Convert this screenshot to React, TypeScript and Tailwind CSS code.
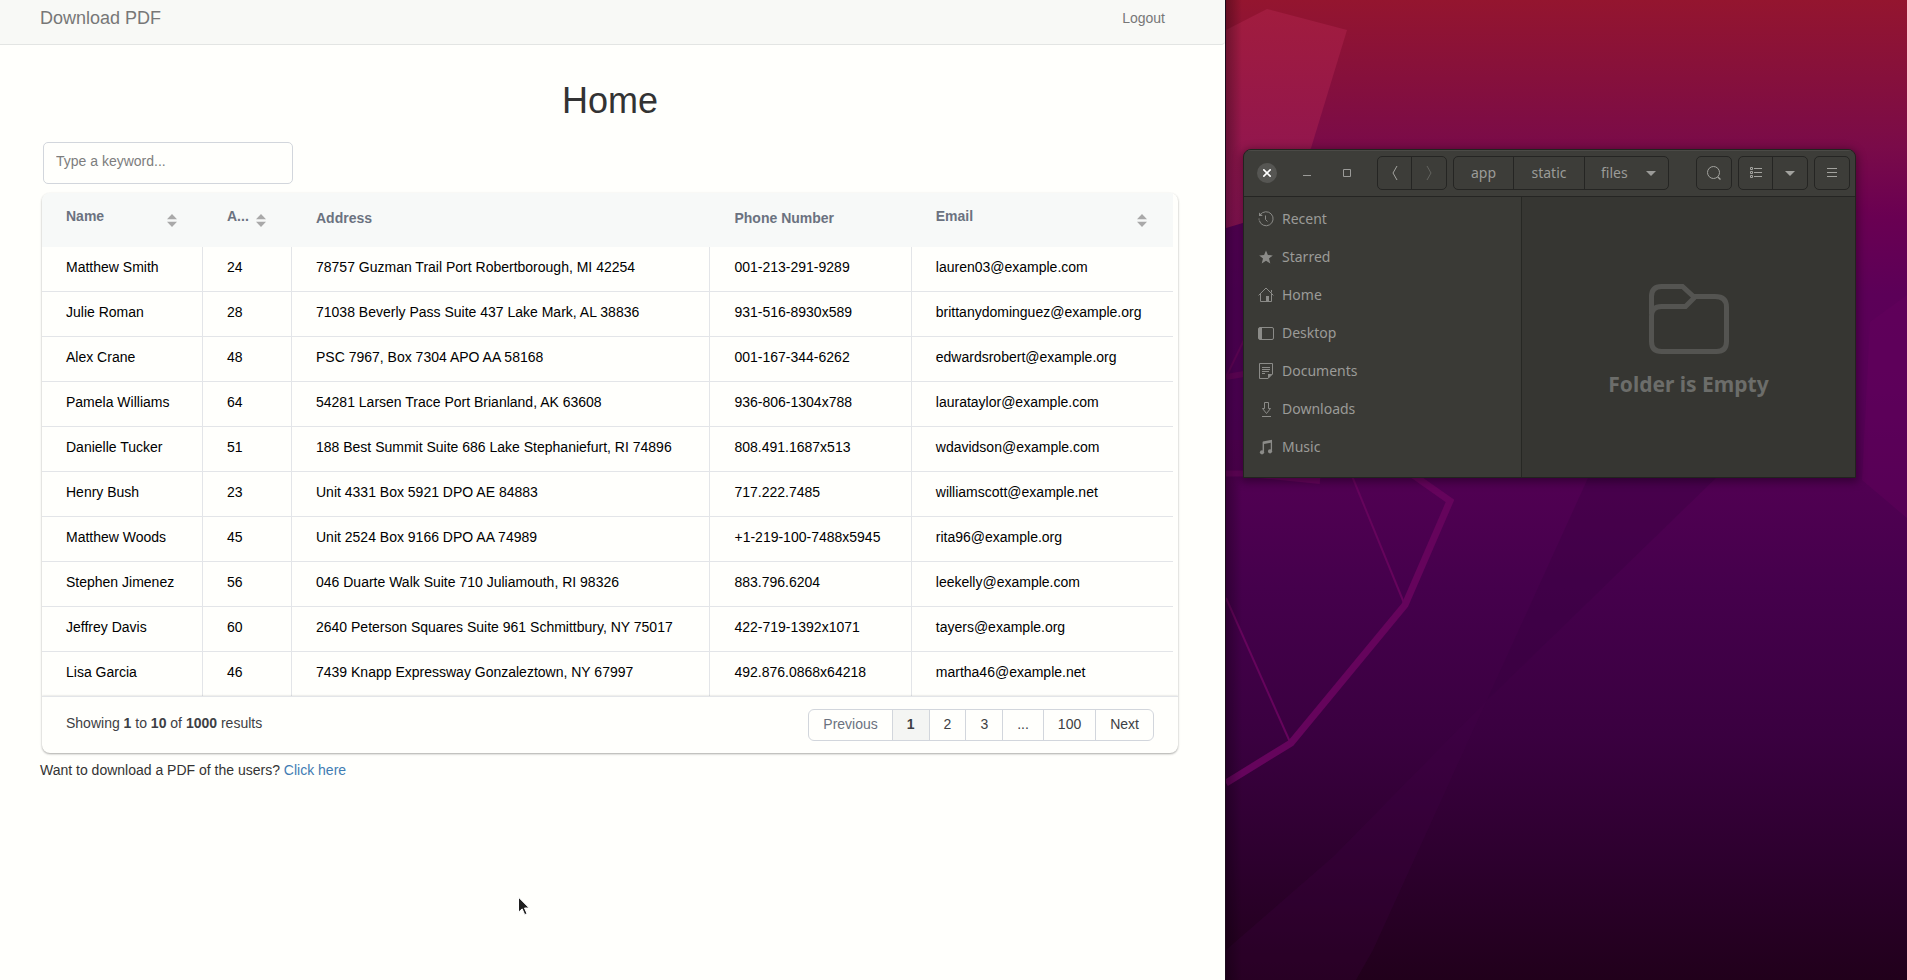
import type { ReactNode } from "react";

const people = [
  ["Matthew Smith", "24", "78757 Guzman Trail Port Robertborough, MI 42254", "001-213-291-9289", "lauren03@example.com"],
  ["Julie Roman", "28", "71038 Beverly Pass Suite 437 Lake Mark, AL 38836", "931-516-8930x589", "brittanydominguez@example.org"],
  ["Alex Crane", "48", "PSC 7967, Box 7304 APO AA 58168", "001-167-344-6262", "edwardsrobert@example.org"],
  ["Pamela Williams", "64", "54281 Larsen Trace Port Brianland, AK 63608", "936-806-1304x788", "laurataylor@example.com"],
  ["Danielle Tucker", "51", "188 Best Summit Suite 686 Lake Stephaniefurt, RI 74896", "808.491.1687x513", "wdavidson@example.com"],
  ["Henry Bush", "23", "Unit 4331 Box 5921 DPO AE 84883", "717.222.7485", "williamscott@example.net"],
  ["Matthew Woods", "45", "Unit 2524 Box 9166 DPO AA 74989", "+1-219-100-7488x5945", "rita96@example.org"],
  ["Stephen Jimenez", "56", "046 Duarte Walk Suite 710 Juliamouth, RI 98326", "883.796.6204", "leekelly@example.com"],
  ["Jeffrey Davis", "60", "2640 Peterson Squares Suite 961 Schmittbury, NY 75017", "422-719-1392x1071", "tayers@example.org"],
  ["Lisa Garcia", "46", "7439 Knapp Expressway Gonzaleztown, NY 67997", "492.876.0868x64218", "martha46@example.net"],
];

const columns = [
  { label: "Name", sortable: true },
  { label: "Age", short: "A...", sortable: true },
  { label: "Address", sortable: false },
  { label: "Phone Number", sortable: false },
  { label: "Email", sortable: true },
];

const pages = ["Previous", "1", "2", "3", "...", "100", "Next"];

function SortButton({ label }: { label: string }) {
  return (
    <button type="button" aria-label={`Sort by ${label}`} className="shrink-0 pt-1">
      <svg width="10" height="13" viewBox="0 0 10 13" fill="#a9a9a9">
        <path d="M5 0 10 5.3H0z" />
        <path d="M5 13 0 7.7h10z" />
      </svg>
    </button>
  );
}

function UsersTable() {
  return (
    <div className="mx-[2px] overflow-hidden rounded-lg bg-[#fffffc] shadow-[0_1px_3px_0_rgba(0,0,0,0.1),0_1px_2px_0_rgba(0,0,0,0.26)]">
      <div className="pr-[5px]">
        <table className="w-full table-fixed border-separate border-spacing-0 text-left text-sm leading-5">
          <colgroup>
            <col className="w-[161px]" />
            <col className="w-[89px]" />
            <col className="w-[37%]" />
            <col className="w-[17.8%]" />
            <col />
          </colgroup>
          <thead className="bg-[#f7f9f8] text-[#6b7280]">
            <tr>
              {columns.map((c) => (
                <th key={c.label} scope="col" className="h-[54px] px-6 pb-1 font-bold">
                  {c.sortable ? (
                    <div className="flex items-center justify-between pr-[2px]">
                      <span className="pb-1">{c.short ?? c.label}</span>
                      <SortButton label={c.label} />
                    </div>
                  ) : (
                    c.label
                  )}
                </th>
              ))}
            </tr>
          </thead>
          <tbody className="text-black">
            {people.map((row) => (
              <tr key={row[0]} className="group">
                {row.map((cell, i) => (
                  <td
                    key={i}
                    className="h-[45px] border-r border-b border-[#e3e5e8] px-6 pb-1 whitespace-nowrap group-last:h-11 group-last:border-b-0 last:border-r-0"
                  >
                    {cell}
                  </td>
                ))}
              </tr>
            ))}
          </tbody>
        </table>
      </div>
      <div className="flex items-center justify-between border-t border-[#e3e5e8] px-6 py-3 shadow-[0_0_2px_rgba(0,0,0,0.2)]">
        <p className="pb-1 text-sm leading-5 text-[#3d4044]">
          Showing <b>1</b> to <b>10</b> of <b>1000</b> results
        </p>
        <nav aria-label="Pages" className="flex overflow-hidden rounded-md border border-[#d2d6dc]">
          {pages.map((p) => (
            <button
              key={p}
              type="button"
              className={
                "border-r border-[#d2d6dc] px-[14px] pt-1 pb-[6px] text-sm leading-5 last:border-r-0 " +
                (p === "1"
                  ? "bg-[#f4f5f3] font-bold text-[#3d4044]"
                  : p === "Previous"
                    ? "text-[#6b7280]"
                    : "text-[#3d4044]")
              }
            >
              {p}
            </button>
          ))}
        </nav>
      </div>
    </div>
  );
}

function Pointer() {
  return (
    <svg
      className="absolute top-[896px] left-[517px]"
      width="14"
      height="21"
      viewBox="0 0 14 21"
      aria-hidden="true"
    >
      <path
        d="M1.5 1.2V16.2L5.2 12.9L7.7 18.7L10 17.7L7.5 12H12.2Z"
        fill="#1f1f1f"
        stroke="#fff"
        strokeWidth="1"
      />
    </svg>
  );
}

function WebPage() {
  return (
    <div className="relative border-r border-[#1c0b1c] bg-[#fffffc] font-['Liberation_Sans',Arial,sans-serif] text-[#333]">
      <header className="flex h-[45px] items-start justify-between rounded-br border-b border-[#e3e5e3] bg-[#f8f9f6] pr-[60px] pl-10 text-[#777]">
        <a href="#home" className="pt-2 text-lg leading-5">
          Download PDF
        </a>
        <a href="#logout" className="pt-2 text-sm leading-5">
          Logout
        </a>
      </header>
      <main className="pr-[45px] pl-10">
        <h1 className="pt-9 text-center text-4xl leading-10">Home</h1>
        <input
          type="text"
          aria-label="Type a keyword"
          placeholder="Type a keyword..."
          className="mt-[21px] mb-[9px] ml-[3px] block h-[42px] w-[250px] rounded-[5px] border border-[#d2d6dc] bg-[#fffffc] px-3 pb-1 text-sm leading-5 outline-none placeholder:text-[#7d7d7d]"
        />
        <UsersTable />
        <p className="pt-[7px] text-sm leading-5">
          Want to download a PDF of the users?{" "}
          <a href="#download" className="text-[#3f7cb3]">
            Click here
          </a>
        </p>
      </main>
      <Pointer />
    </div>
  );
}

function Wallpaper() {
  return (
    <svg
      className="absolute inset-0 h-full w-full"
      viewBox="0 0 681 980"
      preserveAspectRatio="none"
      aria-hidden="true"
    >
      <defs>
        <linearGradient id="sky" x1="0" y1="0" x2="0" y2="1">
          <stop offset="0" stopColor="#94152f" />
          <stop offset="0.08" stopColor="#86103c" />
          <stop offset="0.15" stopColor="#7a0b49" />
          <stop offset="0.22" stopColor="#6a0052" />
          <stop offset="0.3" stopColor="#5c0058" />
          <stop offset="0.4" stopColor="#580058" />
          <stop offset="0.5" stopColor="#500052" />
          <stop offset="0.6" stopColor="#45004c" />
          <stop offset="0.75" stopColor="#3a0040" />
          <stop offset="0.88" stopColor="#2d002e" />
          <stop offset="1" stopColor="#21001b" />
        </linearGradient>
        <linearGradient id="facet" x1="0" y1="0" x2="0" y2="1">
          <stop offset="0" stopColor="#a11c3e" />
          <stop offset="1" stopColor="#8a1356" />
        </linearGradient>
        <linearGradient id="edge" x1="0" y1="0" x2="1" y2="0">
          <stop offset="0" stopColor="#000" stopOpacity="0.3" />
          <stop offset="1" stopColor="#000" stopOpacity="0" />
        </linearGradient>
      </defs>
      <rect width="681" height="980" fill="url(#sky)" />
      <path d="M0 228 40 216V440H0Z" fill="#50005a" fillOpacity="0.7" />
      <path d="M0 30 41 9 121 30 85 148 40 216 0 228Z" fill="url(#facet)" />
      <path d="M681 295 644 322 636 480 681 518Z" fill="#66005e" fillOpacity="0.35" />
      <path d="M362 478H490L261 700Z" fill="#35003f" fillOpacity="0.3" />
      <path d="M261 700 108 856 0 950V980H130L147 950Z" fill="#45004b" fillOpacity="0.2" />
      <g fill="none" stroke="#65045c">
        <path d="M0 377 18 374M0 473.5H18L94 481" strokeWidth="6" />
        <path d="M0 377 18 340M126 476 178 603M0 598 64 742" strokeWidth="2" />
        <path d="M180 470 224 501 179 605 65 743 0 783" strokeWidth="7" />
      </g>
      <rect width="16" height="980" fill="url(#edge)" />
    </svg>
  );
}

function Glyph({ children }: { children: ReactNode }) {
  return (
    <svg width="16" height="16" viewBox="0 0 16 16" fill="none" stroke="currentColor" aria-hidden="true">
      {children}
    </svg>
  );
}

const places: { name: string; icon: ReactNode }[] = [
  {
    name: "Recent",
    icon: (
      <>
        <path d="M2.3 3.8A7 7 0 1 1 1.300 9.5" />
        <path d="M1 7.5V8.7" />
        <path d="M7.5 4.500V8.5L9.500 10.500" />
        <path d="M1 1.5V5H4.800Z" fill="currentColor" stroke="none" />
      </>
    ),
  },
  {
    name: "Starred",
    icon: (
      <path
        d="M8 1.5 9.9 6 14.8 6.4 11 9.5 12.3 14.4 8 11.7 3.7 14.4 5 9.5 1.2 6.4 6.1 6Z"
        fill="currentColor"
        stroke="none"
      />
    ),
  },
  {
    name: "Home",
    icon: (
      <>
        <path d="M.6 8.400 8 1 15.4 8.400" />
        <path d="M2.5 7V14.5H13.5V7M13.5 3V5.5" />
        <path d="M8 9h3v5.5H8z" fill="currentColor" stroke="none" />
      </>
    ),
  },
  {
    name: "Desktop",
    icon: (
      <>
        <rect x=".5" y="2.5" width="15" height="12" rx="1.5" />
        <path d="M1 3h3v11H1z" fill="currentColor" stroke="none" />
      </>
    ),
  },
  {
    name: "Documents",
    icon: (
      <>
        <path d="M1.5.5H14.500V11L10 15.500H1.500Z" />
        <path d="M4 4.5H12M4 6.5H12M4 8.5H11M4 10.5H7" />
        <path d="M10 11H14.5L10 15.5Z" fill="currentColor" stroke="none" />
      </>
    ),
  },
  {
    name: "Downloads",
    icon: (
      <>
        <path d="M6.5 1.5H10.5V7.5H12.5L8.5 12.5L4.5 7.5H6.5Z" />
        <path d="M4 15.5H13" />
      </>
    ),
  },
  {
    name: "Music",
    icon: (
      <>
        <path d="M4.800 2.5 14 .8V3.500L6 5V13H4.800Z" fill="currentColor" stroke="none" />
        <path d="M5.400 3V13M13.400 2V12" strokeWidth="1.3" />
        <circle cx="4" cy="13.3" r="2.1" fill="currentColor" stroke="none" />
        <circle cx="12" cy="12.3" r="2.1" fill="currentColor" stroke="none" />
      </>
    ),
  },
];

function ToolGroup({ children }: { children: ReactNode }) {
  return (
    <div className="flex h-[34px] shrink-0 divide-x divide-[#252523] overflow-hidden rounded-[5px] border border-[#252523]">
      {children}
    </div>
  );
}

function ToolButton({ label, dim, children }: { label: string; dim?: boolean; children: ReactNode }) {
  return (
    <button
      type="button"
      aria-label={label}
      className={"flex w-[34px] items-center justify-center " + (dim ? "text-[#62635f]" : "text-[#a3a39f]")}
    >
      {children}
    </button>
  );
}

function Caret() {
  return (
    <svg width="10" height="5" viewBox="0 0 10 5" fill="currentColor" aria-hidden="true">
      <path d="M0 0H10L5 5Z" />
    </svg>
  );
}

function FileManager() {
  return (
    <section
      aria-label="Files"
      className="relative overflow-hidden rounded-t-lg border border-[#22231f] bg-[#363632] font-['Noto_Sans','Open_Sans',sans-serif] text-sm leading-5 text-[#9b9b98] shadow-[0_2px_8px_2px_rgba(0,0,0,0.35)]"
    >
      <div className="flex h-[47px] items-center border-b border-[#252523] bg-[#3d3d39] pr-[5px] pl-[13px] shadow-[inset_0_1px_0_#4a4a46]">
        <button
          type="button"
          aria-label="Close"
          className="flex size-5 items-center justify-center rounded-full bg-[#565653] text-white"
        >
          <svg width="8" height="8" viewBox="0 0 8 8" fill="none" stroke="currentColor" strokeWidth="1.6">
            <path d="M.3.3 7.700 7.700M7.700.3.3 7.700" />
          </svg>
        </button>
        <button type="button" aria-label="Minimize" className="ml-5 flex size-5 items-center justify-center">
          <svg width="8" height="8" viewBox="0 0 8 8" stroke="currentColor">
            <path d="M0 6.5H8" />
          </svg>
        </button>
        <button type="button" aria-label="Maximize" className="ml-5 flex size-5 items-center justify-center">
          <svg width="8" height="8" viewBox="0 0 8 8" fill="none" stroke="currentColor">
            <path d="M.5.5h7v7h-7z" />
          </svg>
        </button>
        <div className="ml-5 flex flex-1 items-center gap-[6px]">
          <ToolGroup>
            <ToolButton label="Back">
              <Glyph>
                <path d="M10 1 6 8 10 15" />
              </Glyph>
            </ToolButton>
            <ToolButton label="Forward" dim>
              <Glyph>
                <path d="M6 1 10 8 6 15" />
              </Glyph>
            </ToolButton>
          </ToolGroup>
          <ToolGroup>
            <button type="button" className="w-[60px]">
              app
            </button>
            <button type="button" className="w-[71px]">
              static
            </button>
            <button type="button" className="flex w-[83px] items-center justify-between pr-3 pl-4">
              files
              <Caret />
            </button>
          </ToolGroup>
        </div>
        <div className="flex items-center gap-[6px]">
          <ToolGroup>
            <ToolButton label="Search">
              <Glyph>
                <circle cx="7.500" cy="7.500" r="6" />
                <path d="M11.8 12 14.5 14.500" strokeWidth="1.4" />
              </Glyph>
            </ToolButton>
          </ToolGroup>
          <ToolGroup>
            <ToolButton label="List view">
              <Glyph>
                <path d="M2.5 2.5h2v2h-2zM2.5 6.5h2v2h-2zM2.5 10.5h2v2h-2zM6 3.500h8M6 7.500h8M6 11.500h8" />
              </Glyph>
            </ToolButton>
            <ToolButton label="View options">
              <Caret />
            </ToolButton>
          </ToolGroup>
          <ToolGroup>
            <ToolButton label="Menu">
              <Glyph>
                <path d="M3 3.5h10M3 7.500h10M3 11.500h10" />
              </Glyph>
            </ToolButton>
          </ToolGroup>
        </div>
      </div>
      <div className="flex">
        <ul className="w-[278px] shrink-0 border-r border-[#272824] bg-[#3a3a36] pt-[3px] pb-[11px]">
          {places.map((p) => (
            <li key={p.name}>
              <button type="button" className="flex h-[38px] w-full items-center gap-2 pl-[14px] text-left">
                <span className="text-[#8b8b88]">
                  <Glyph>{p.icon}</Glyph>
                </span>
                {p.name}
              </button>
            </li>
          ))}
        </ul>
        <div className="flex flex-1 flex-col items-center justify-center pt-2 text-[#6c6d6a]">
          <svg width="80" height="70" viewBox="0 0 80 70" fill="none" stroke="#545451" strokeWidth="5">
            <path d="M2.5 30V12.5Q2.5 2.500 12.5 2.500H33.500L44.500 12.500H66Q77.500 12.500 77.500 23V57.500Q77.500 67.500 67.500 67.500H12.500Q2.500 67.500 2.500 57.500V32Q2.500 22.500 12.500 22.500H36.500L45.500 13.500" />
          </svg>
          <h2 className="pt-4 text-[21px] leading-7 font-bold">Folder is Empty</h2>
        </div>
      </div>
    </section>
  );
}

export default function App() {
  return (
    <div className="grid min-h-screen grid-cols-[1226fr_681fr]">
      <WebPage />
      <div className="relative pt-[149px] pr-[51px] pl-[17px]">
        <Wallpaper />
        <FileManager />
      </div>
    </div>
  );
}
